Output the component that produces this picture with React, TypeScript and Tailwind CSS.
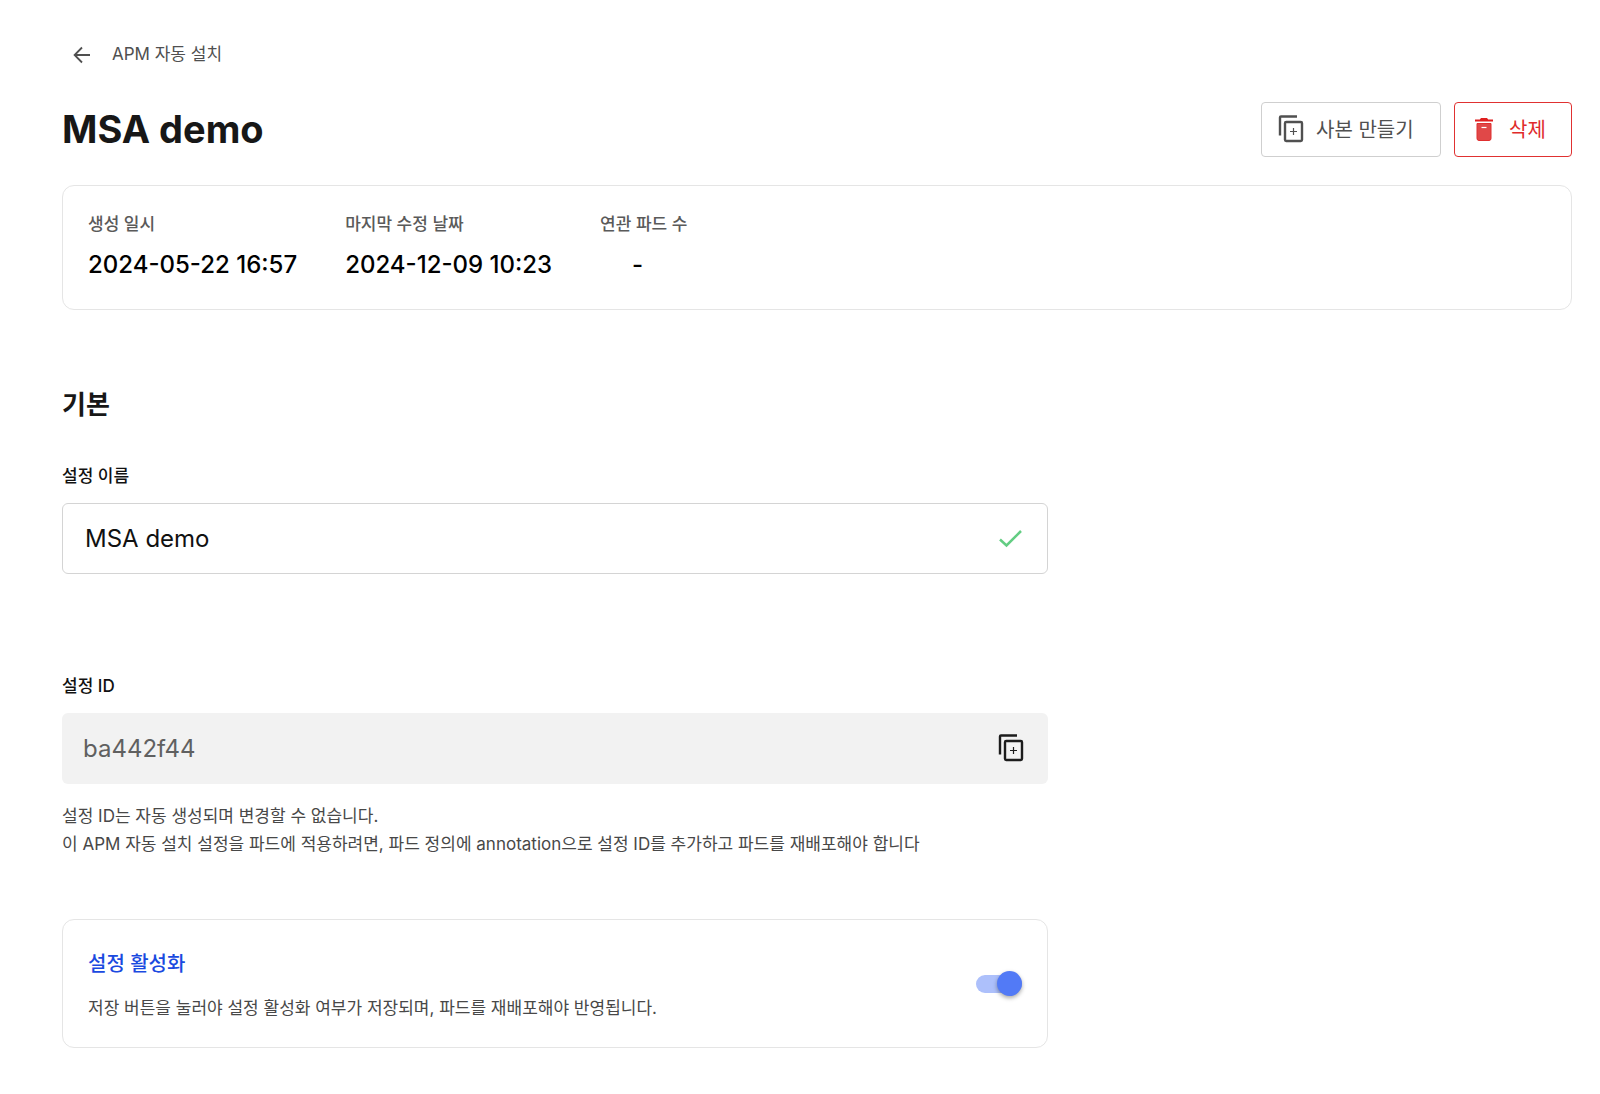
import { useState } from 'react';

const details = [
  { label: '생성 일시', value: '2024-05-22 16:57' },
  { label: '마지막 수정 날짜', value: '2024-12-09 10:23' },
  { label: '연관 파드 수', value: '-' },
];

function BackIcon() {
  return (
    <svg width="24" height="24" viewBox="0 0 24 24" fill="none" stroke="currentColor" strokeWidth="1.8" aria-hidden="true">
      <path d="M20 12H5M12 4.5 4.6 12l7.4 7.5" />
    </svg>
  );
}

function DuplicateIcon() {
  return (
    <svg width="28" height="30" viewBox="0 0 28 30" fill="none" stroke="currentColor" aria-hidden="true">
      <path d="M3 20.5V2.500a1 1 0 0 1 1-1h16" strokeWidth="2.4" />
      <rect x="8" y="7" width="17" height="19" rx="1.2" strokeWidth="2.4" />
      <path d="M16.5 13v7M13 16.500h7" strokeWidth="1.2" />
    </svg>
  );
}

function TrashIcon() {
  return (
    <svg width="20" height="26" viewBox="0 0 20 26" aria-hidden="true">
      <path d="M1 2.5h4.8L7 1h6l1.2 1.5H19V4.5H1z" fill="#df1f1f" />
      <path d="M3 6.5h14V21.5a2 2 0 0 1-2 2H5a2 2 0 0 1-2-2z" fill="#e04848" stroke="#df2f2f" />
      <path d="M7.5 10.5h5" stroke="#fff" strokeWidth="1.2" />
    </svg>
  );
}

function CheckIcon() {
  return (
    <svg width="24" height="20" viewBox="0 0 24 20" fill="none" stroke="#63cd83" strokeWidth="2.5" aria-hidden="true">
      <path d="m1 10.500 6.500 6L22 2" />
    </svg>
  );
}

export default function App() {
  const [name, setName] = useState('MSA demo');
  const [enabled, setEnabled] = useState(true);

  return (
    <div className="min-h-screen bg-white pt-[41px] pr-7 pb-11 pl-[62px] font-['Inter','Noto_Sans_CJK_KR',sans-serif] text-[#111]">
      {/* Breadcrumb */}
      <nav className="flex h-7 items-center pl-2">
        <a href="#" className="flex items-center gap-[18px] text-[17px] text-[#505050]">
          <BackIcon />
          APM 자동 설치
        </a>
      </nav>

      {/* Title */}
      <header className="mt-[33px] flex items-center justify-between">
        <h1 className="text-[38px] leading-[55px] font-bold text-[#171717]">MSA demo</h1>
        <div className="flex gap-[13px]">
          <button type="button" className="flex h-[55px] w-[180px] items-center gap-[11px] rounded border border-[#cfcfcf] pl-[15px] text-[20px] text-[#505050]">
            <DuplicateIcon />
            사본 만들기
          </button>
          <button type="button" className="flex h-[55px] w-[118px] items-center gap-[15px] rounded border border-[#e03131] pl-[19px] text-[20px] text-[#e02b2b]">
            <TrashIcon />
            삭제
          </button>
        </div>
      </header>

      {/* Summary */}
      <dl className="mt-7 flex h-[125px] gap-12 rounded-xl border border-[#e5e5e5] px-[25px] pt-6">
        {details.map((item) => (
          <div key={item.label}>
            <dt className="text-[17px] leading-7 font-medium text-[#5a5a5a]">{item.label}</dt>
            <dd className={`mt-[9px] text-[24px] leading-9 font-medium text-black ${item.value === '-' ? 'pl-8' : ''}`}>{item.value}</dd>
          </div>
        ))}
      </dl>

      <main className="mt-[75px] w-full max-w-[986px]">
        <h2 className="text-[26px] leading-10 font-bold text-[#171717]">기본</h2>

        {/* Name */}
        <label htmlFor="config-name" className="mt-[37px] block text-[17px] leading-7 font-medium">설정 이름</label>
        <div className="mt-[13px] flex h-[71px] items-center rounded-md border border-[#d4d4d4] pr-6 pl-[22px]">
          <input
            id="config-name"
            value={name}
            onChange={(e) => setName(e.target.value)}
            className="min-w-0 flex-1 bg-transparent text-[24px] leading-9 outline-none"
          />
          <CheckIcon />
        </div>

        {/* ID */}
        <label htmlFor="config-id" className="mt-[98px] block text-[17px] leading-7 font-medium">설정 ID</label>
        <div className="mt-[13px] flex h-[71px] items-center rounded-md bg-[#f2f2f2] pr-[23px] pl-[21px]">
          <input id="config-id" readOnly value="ba442f44" className="min-w-0 flex-1 bg-transparent text-[24px] leading-9 text-[#606060] outline-none" />
          <button type="button" aria-label="복사" className="text-[#1c1c1c]">
            <DuplicateIcon />
          </button>
        </div>
        <p className="mt-[18px] text-[17px] leading-7 text-[#484848]">
          설정 ID는 자동 생성되며 변경할 수 없습니다.
          <br />
          이 APM 자동 설치 설정을 파드에 적용하려면, 파드 정의에 annotation으로 설정 ID를 추가하고 파드를 재배포해야 합니다
        </p>

        {/* Activation */}
        <section className="mt-[61px] flex h-[129px] items-center justify-between rounded-xl border border-[#e5e5e5] px-[25px]">
          <div className="pt-0.5">
            <label htmlFor="config-enabled" className="block text-[20px] leading-8 font-medium text-[#1a4ae0]">설정 활성화</label>
            <p className="mt-[14px] text-[17px] leading-7 text-[#484848]">저장 버튼을 눌러야 설정 활성화 여부가 저장되며, 파드를 재배포해야 반영됩니다.</p>
          </div>
          <input
            id="config-enabled"
            type="checkbox"
            role="switch"
            checked={enabled}
            onChange={(e) => setEnabled(e.target.checked)}
            className="flex h-[18px] w-[46px] cursor-pointer appearance-none items-center rounded-full bg-gray-300 before:size-[25px] before:shrink-0 before:rounded-full before:bg-white before:shadow-[0_2px_4px_rgba(0,0,0,0.35)] checked:justify-end checked:bg-[#adc0fb] checked:before:bg-[#527af6]"
          />
        </section>
      </main>
    </div>
  );
}
